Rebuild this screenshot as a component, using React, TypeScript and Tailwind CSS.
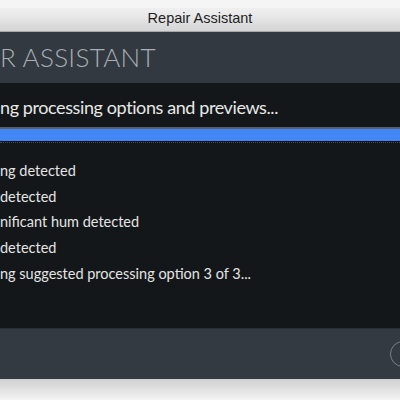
export default function App() {
  const lines = [
    "ng detected",
    "detected",
    "nificant hum detected",
    "detected",
    "ng suggested processing option 3 of 3...",
  ];

  return (
    <div className="w-[400px] h-[400px] overflow-hidden flex flex-col bg-[#f2f2f2] font-['Lato','Noto_Sans',sans-serif]">
      {/* window title bar */}
      <div className="h-[32px] shrink-0 flex flex-col bg-gradient-to-b from-[#f6f6f6] via-[#e9e9e9] to-[#d4d4d4] border-b border-[#a8a8a8]">
        <div className="h-[10px] bg-[#f5f5f5]" />
        <div className="flex-1 flex items-center justify-center pb-[1px] text-[14.5px] text-[#1e1e1e] font-['Liberation_Sans',Arial,sans-serif]">
          Repair Assistant
        </div>
      </div>

      {/* header */}
      <div className="h-[51px] shrink-0 bg-[#323940] flex items-center">
        <div className="pb-[1px] text-[26px] font-light tracking-[0.3px] text-[#a9adb2] leading-none whitespace-nowrap">
          R ASSISTANT
        </div>
      </div>

      {/* content */}
      <div className="h-[245px] shrink-0 bg-[#141719] flex flex-col">
        <div className="h-[44px] flex items-center pt-[5px] text-[18px] tracking-[-0.4px] text-[#e8e8e8] whitespace-nowrap">
          ng processing options and previews...
        </div>
        <div className="h-[17px] flex flex-col">
          <div className="h-[2px] bg-[#5c6064]" />
          <div className="h-[12px] bg-[#4287f5]" />
          <div className="h-[1px] bg-[#101214]" />
          <div className="h-[2px] border-t border-dotted border-[#4a4e52]" />
        </div>
        <div className="flex flex-col pt-[14px] text-[14.5px] text-[#e4e4e4]">
          {lines.map((t, i) => (
            <div key={i} className="h-[25.7px] flex items-center whitespace-nowrap">
              {t}
            </div>
          ))}
        </div>
      </div>

      {/* footer */}
      <div className="h-[51px] shrink-0 bg-[#333a41] border-t border-[#2a3036] flex items-center justify-end">
        <div className="w-[26px] h-[26px] rounded-full border border-[#7a7f85] -mr-[16px]" />
      </div>

      <div className="flex-1 bg-gradient-to-b from-[#d0d0d0] to-[#f4f4f4]" />
    </div>
  );
}
